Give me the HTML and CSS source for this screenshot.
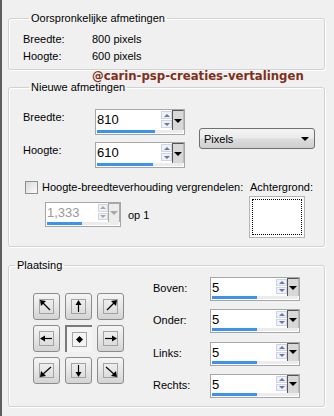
FILE: index.html
```html
<!DOCTYPE html>
<html lang="nl">
<head>
    <meta charset="UTF-8">
    <title>Afmetingen canvas</title>
    <link rel="stylesheet" href="styles.css">
</head>
<body>
    <div class="window">
        <!-- Original size -->
        <fieldset class="group group-orig">
            <legend>Oorspronkelijke afmetingen</legend>
            <div class="info-row"><span class="info-label">Breedte:</span><span>800 pixels</span></div>
            <div class="info-row"><span class="info-label">Hoogte:</span><span>600 pixels</span></div>
        </fieldset>

        <div class="watermark">@carin-psp-creaties-vertalingen</div>

        <!-- New size -->
        <fieldset class="group group-new">
            <legend>Nieuwe afmetingen</legend>
            <div class="size-grid">
                <span class="label">Breedte:</span>
                <div class="spin spin-lg">
                    <span class="spin-value">810</span>
                    <span class="spin-arrows"><span class="arr up"></span><span class="arr down"></span></span>
                    <span class="spin-drop"></span>
                    <span class="spin-track"><span class="spin-fill" style="width:58px"></span></span>
                </div>
                <div class="select">Pixels<span class="caret"></span></div>
                <span class="label">Hoogte:</span>
                <div class="spin spin-lg">
                    <span class="spin-value">610</span>
                    <span class="spin-arrows"><span class="arr up"></span><span class="arr down"></span></span>
                    <span class="spin-drop"></span>
                    <span class="spin-track"><span class="spin-fill" style="width:56px"></span></span>
                </div>
            </div>

            <div class="lock">
                <div class="lock-left">
                    <label class="check"><span class="box"></span>Hoogte-breedteverhouding vergrendelen:</label>
                    <div class="ratio">
                        <div class="spin spin-sm disabled">
                            <span class="spin-value">1,333</span>
                            <span class="spin-arrows"><span class="arr up"></span><span class="arr down"></span></span>
                            <span class="spin-drop"></span>
                            <span class="spin-track"><span class="spin-fill" style="width:35px"></span></span>
                        </div>
                        <span>op 1</span>
                    </div>
                </div>
                <div class="bg-col">
                    <span>Achtergrond:</span>
                    <div class="swatch"><span></span></div>
                </div>
            </div>
        </fieldset>

        <!-- Placement -->
        <fieldset class="group group-place">
            <legend>Plaatsing</legend>
            <div class="place">
                <div class="anchor-grid">
                    <span class="anchor"><svg width="15" height="15" viewBox="0 0 15 15"><rect x="0.5" y="0.5" width="14" height="14" class="frame"/><path d="M11 11 L3 3" class="shaft"/><path d="M1 1 L7 2 L2 7 Z" class="head"/></svg></span>
                    <span class="anchor"><svg width="15" height="15" viewBox="0 0 15 15"><rect x="0.5" y="0.5" width="14" height="14" class="frame"/><path d="M7.5 13 L7.5 4" class="shaft"/><path d="M7.5 1 L10.5 6 L4.5 6 Z" class="head"/></svg></span>
                    <span class="anchor"><svg width="15" height="15" viewBox="0 0 15 15"><rect x="0.5" y="0.5" width="14" height="14" class="frame"/><path d="M4 11 L12 3" class="shaft"/><path d="M14 1 L8 2 L13 7 Z" class="head"/></svg></span>
                    <span class="anchor"><svg width="15" height="15" viewBox="0 0 15 15"><rect x="0.5" y="0.5" width="14" height="14" class="frame"/><path d="M13 7.5 L4 7.5" class="shaft"/><path d="M1 7.5 L6 4.5 L6 10.5 Z" class="head"/></svg></span>
                    <span class="anchor active"><svg width="15" height="15" viewBox="0 0 15 15"><rect x="0.5" y="0.5" width="14" height="14" class="frame"/><path d="M7.5 4 L11 7.5 L7.5 11 L4 7.5 Z" class="head"/></svg></span>
                    <span class="anchor"><svg width="15" height="15" viewBox="0 0 15 15"><rect x="0.5" y="0.5" width="14" height="14" class="frame"/><path d="M2 7.5 L11 7.5" class="shaft"/><path d="M14 7.5 L9 4.5 L9 10.5 Z" class="head"/></svg></span>
                    <span class="anchor"><svg width="15" height="15" viewBox="0 0 15 15"><rect x="0.5" y="0.5" width="14" height="14" class="frame"/><path d="M12 4 L3 12" class="shaft"/><path d="M1 14 L2 8 L7 13 Z" class="head"/></svg></span>
                    <span class="anchor"><svg width="15" height="15" viewBox="0 0 15 15"><rect x="0.5" y="0.5" width="14" height="14" class="frame"/><path d="M7.5 2 L7.5 11" class="shaft"/><path d="M7.5 14 L10.5 9 L4.5 9 Z" class="head"/></svg></span>
                    <span class="anchor"><svg width="15" height="15" viewBox="0 0 15 15"><rect x="0.5" y="0.5" width="14" height="14" class="frame"/><path d="M3 4 L12 12" class="shaft"/><path d="M14 14 L13 8 L8 13 Z" class="head"/></svg></span>
                </div>

                <div class="margins">
                    <div class="margin-row">
                        <span class="label">Boven:</span>
                        <div class="spin spin-md">
                            <span class="spin-value">5</span>
                            <span class="spin-arrows"><span class="arr up"></span><span class="arr down"></span></span>
                            <span class="spin-drop"></span>
                            <span class="spin-track"><span class="spin-fill" style="width:45px"></span></span>
                        </div>
                    </div>
                    <div class="margin-row">
                        <span class="label">Onder:</span>
                        <div class="spin spin-md">
                            <span class="spin-value">5</span>
                            <span class="spin-arrows"><span class="arr up"></span><span class="arr down"></span></span>
                            <span class="spin-drop"></span>
                            <span class="spin-track"><span class="spin-fill" style="width:45px"></span></span>
                        </div>
                    </div>
                    <div class="margin-row">
                        <span class="label">Links:</span>
                        <div class="spin spin-md">
                            <span class="spin-value">5</span>
                            <span class="spin-arrows"><span class="arr up"></span><span class="arr down"></span></span>
                            <span class="spin-drop"></span>
                            <span class="spin-track"><span class="spin-fill" style="width:45px"></span></span>
                        </div>
                    </div>
                    <div class="margin-row">
                        <span class="label">Rechts:</span>
                        <div class="spin spin-md">
                            <span class="spin-value">5</span>
                            <span class="spin-arrows"><span class="arr up"></span><span class="arr down"></span></span>
                            <span class="spin-drop"></span>
                            <span class="spin-track"><span class="spin-fill" style="width:45px"></span></span>
                        </div>
                    </div>
                </div>
            </div>
        </fieldset>
    </div>
</body>
</html>
```

FILE: styles.css
```css
body {
    margin: 0;
    background: #f0f0f0;
    font-family: "Liberation Sans", Arial, sans-serif;
    font-size: 11px;
    color: #000;
}
.window {
    height: 416px;
    box-sizing: border-box;
    border-left: 2px solid #5e5e5e;
    padding: 12px 9px 0 6px;
}

/* group boxes */
.group {
    margin: 0;
    padding: 0;
    min-width: 0;
    border: 1px solid #d2d2d2;
    border-radius: 3px;
    box-shadow: inset 1px 1px 0 #fff, 1px 1px 0 #fff;
}
.group legend {
    margin-left: 6px;
    padding: 0 2px;
    line-height: 12px;
}
.group-orig {
    padding: 7px 0 4px 14px;
}
.info-row {
    display: flex;
    line-height: 17px;
}
.info-label {
    width: 69px;
}

.watermark {
    height: 11px;
    line-height: 11px;
    padding-left: 84px;
    font-family: "DejaVu Sans Condensed", "DejaVu Sans", sans-serif;
    font-weight: bold;
    font-size: 13px;
    color: #80301a;
    white-space: nowrap;
}

.group-new {
    padding: 16px 8px 8px 14px;
}
.size-grid {
    display: grid;
    grid-template-columns: 58px 90px 116px;
    grid-template-rows: 26px 26px;
    column-gap: 14px;
    row-gap: 7px;
}
.size-grid .label {
    padding-top: 2px;
    line-height: 13px;
}
.select {
    grid-column: 3;
    grid-row: 1 / 3;
    align-self: center;
    height: 21px;
    box-sizing: border-box;
    display: flex;
    align-items: center;
    justify-content: space-between;
    padding: 0 5px 0 4px;
    border: 1px solid #707070;
    border-radius: 3px;
    background: linear-gradient(#f3f3f3, #ebebeb 48%, #dddddd 52%, #cfcfcf);
}
.caret {
    border-left: 4px solid transparent;
    border-right: 4px solid transparent;
    border-top: 4px solid #000;
}

/* spin edit with slider bar and drop button */
.spin {
    display: grid;
    grid-template-columns: 1fr 11px 12px;
    grid-template-rows: 1fr 4px;
    box-sizing: border-box;
    border: 1px solid #a6a6a6;
    background: #fff;
}
.spin-lg {
    width: 90px;
    height: 26px;
}
.spin-md {
    width: 90px;
    height: 24px;
}
.spin-sm {
    width: 76px;
    height: 25px;
    grid-template-columns: 1fr 10px 12px;
}
.spin-value {
    padding: 2px 0 0 1px;
    font-size: 13px;
    line-height: 15px;
}
.spin-arrows {
    display: flex;
    flex-direction: column;
    gap: 1px;
    padding: 1px 0 2px;
}
.arr {
    flex: 1;
    display: flex;
    align-items: center;
    justify-content: center;
    border: 1px solid #cfd6e2;
    background: #eef1f6;
}
.arr::before {
    content: "";
    border-left: 3px solid transparent;
    border-right: 3px solid transparent;
}
.arr.up::before {
    border-bottom: 3px solid #6477a8;
}
.arr.down::before {
    border-top: 3px solid #6477a8;
}
.spin-drop {
    display: flex;
    align-items: center;
    justify-content: center;
    border-left: 1px solid #555;
    border-top: 1px solid #555;
    border-right: 1px solid #bbb;
    background: #d8d8d8;
}
.spin-drop::before {
    content: "";
    border-left: 4px solid transparent;
    border-right: 4px solid transparent;
    border-top: 4px solid #000;
}
.spin-track {
    grid-column: 1 / -1;
    margin: 0 1px 1px;
    background: #ececec;
}
.spin-fill {
    display: block;
    height: 100%;
    background: #3a93ee;
}
.disabled .spin-value {
    color: #9a9a9a;
}
.disabled .arr.up::before {
    border-bottom-color: #a8a8a8;
}
.disabled .arr.down::before {
    border-top-color: #a8a8a8;
}
.disabled .spin-drop {
    border-color: #aaa;
    background: #ececec;
}
.disabled .spin-drop::before {
    border-top-color: #a8a8a8;
}

/* lock ratio + background swatch */
.lock {
    display: flex;
    margin-top: 13px;
}
.lock-left {
    flex: 1;
}
.check {
    display: flex;
    align-items: center;
    gap: 4px;
    margin-left: 2px;
    line-height: 13px;
}
.box {
    width: 13px;
    height: 13px;
    box-sizing: border-box;
    border: 1px solid #8e8f8f;
    background: linear-gradient(135deg, #d9d9d9, #fbfbfb);
}
.ratio {
    display: flex;
    align-items: center;
    gap: 7px;
    margin: 8px 0 0 22px;
}
.bg-col {
    width: 56px;
    margin-right: 11px;
    line-height: 13px;
}
.bg-col span {
    padding-left: 1px;
}
.swatch {
    height: 42px;
    margin-top: 2px;
    box-sizing: border-box;
    padding: 2px;
    border: 1px solid #b4b4b4;
    background: #fff;
    display: flex;
}
.swatch span {
    flex: 1;
    border: 1px dotted #000;
}

/* placement */
.group-place {
    margin-top: 12px;
    padding: 6px 0 8px 0;
}
.place {
    display: flex;
    align-items: flex-start;
}
.anchor-grid {
    display: grid;
    grid-template-columns: repeat(3, 27px);
    grid-auto-rows: 27px;
    gap: 5px;
    margin: 16px 0 0 24px;
}
.anchor {
    display: flex;
    align-items: center;
    justify-content: center;
    box-sizing: border-box;
    border: 1px solid #8c8c8c;
    border-radius: 3px;
    background: linear-gradient(#f5f5f5, #e6e6e6 50%, #d3d3d3);
}
.anchor.active {
    border-radius: 0;
    border-width: 2px 0 0 2px;
    border-color: #7a7a7a;
    background: #f4f4f4;
}
.anchor .frame {
    fill: none;
    stroke: #a4a4a4;
}
.anchor .shaft {
    stroke: #000;
    stroke-width: 1.2;
}
.anchor .head {
    fill: #000;
}
.margins {
    display: flex;
    flex-direction: column;
    gap: 8.3px;
    margin-left: 29px;
}
.margin-row {
    display: flex;
    align-items: center;
}
.margin-row .label {
    width: 57px;
    padding-bottom: 2px;
}
```
